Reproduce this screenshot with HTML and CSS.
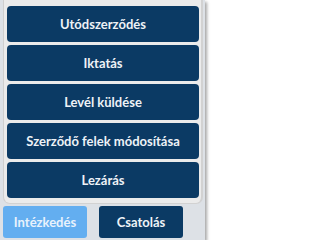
FILE: index.html
```html
<!DOCTYPE html>
<html lang="hu">
<head>
<meta charset="utf-8">
<link rel="stylesheet" href="styles.css">
</head>
<body>
<div class="popup">
  <div class="panel">
    <button class="btn">Utódszerződés</button>
    <button class="btn">Iktatás</button>
    <button class="btn">Levél küldése</button>
    <button class="btn">Szerződő felek módosítása</button>
    <button class="btn">Lezárás</button>
  </div>
  <div class="footer">
    <button class="tab tab-active">Intézkedés</button>
    <button class="tab">Csatolás</button>
  </div>
</div>
</body>
</html>
```
FILE: styles.css
```css
html, body {
  margin: 0;
  padding: 0;
  background: #ffffff;
}
.popup {
  width: 205px;
  height: 240px;
  background: #dde1e6;
  box-shadow: 2px 2px 3px rgba(0, 0, 0, 0.35);
  box-sizing: border-box;
  padding-left: 3px;
  font-family: Lato, "Noto Sans", sans-serif;
}
.panel {
  width: 200px;
  box-sizing: border-box;
  background: #ebebeb;
  border-left: 1px solid #cfcfcf;
  border-right: 2px solid #d2d2d2;
  border-bottom: 1px solid #d2d2d2;
  border-radius: 0 0 7px 7px;
  padding: 6px 2px 5px 3px;
  display: flex;
  flex-direction: column;
  gap: 3px;
}
.btn {
  height: 36px;
  border: none;
  border-radius: 4px;
  background: #0b3a64;
  color: #eef2f7;
  font-family: inherit;
  font-size: 13px;
  font-weight: 700;
  padding: 0;
  cursor: pointer;
}
.footer {
  display: flex;
  gap: 12px;
  margin-top: 2px;
}
.tab {
  width: 84px;
  height: 32px;
  border: none;
  border-radius: 3px;
  background: #0b3a64;
  color: #eef2f7;
  font-family: inherit;
  font-size: 13px;
  font-weight: 700;
  padding: 0;
}
.tab-active {
  background: #63aef0;
  color: #e8f2fc;
}
```
